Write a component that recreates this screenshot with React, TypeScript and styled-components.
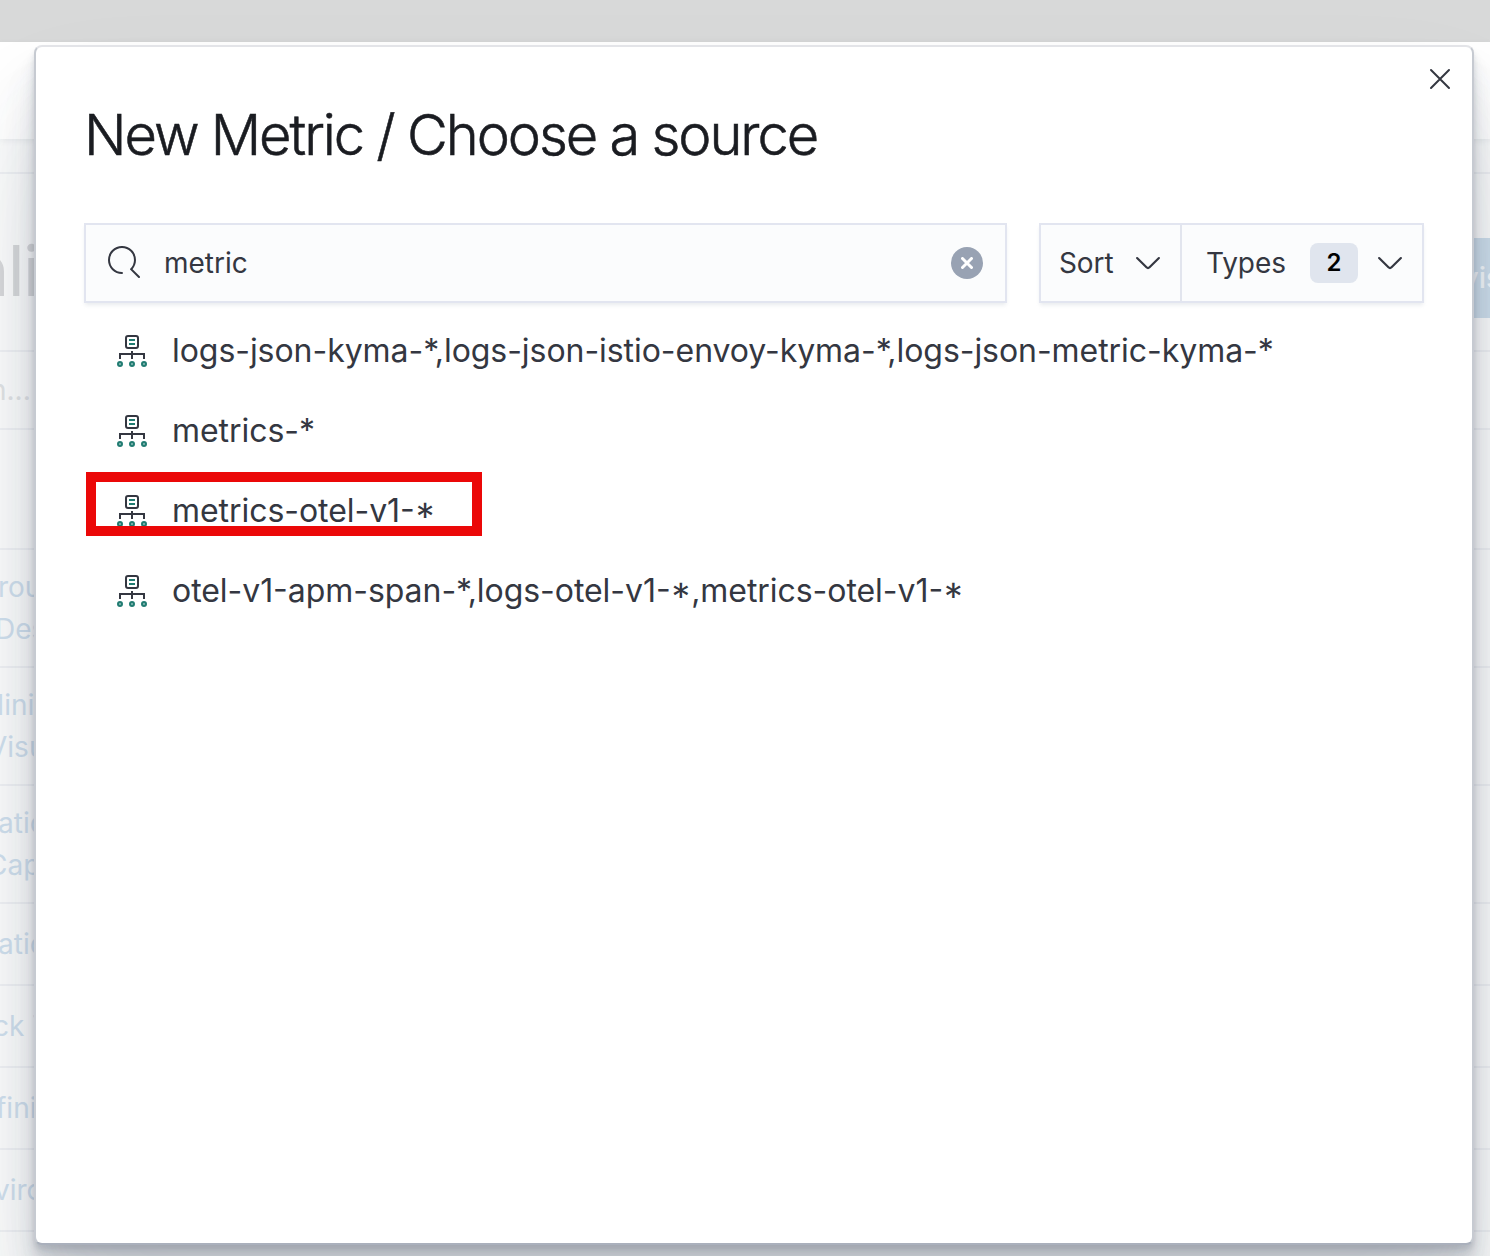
import React from "react";
import styled, { createGlobalStyle, css } from "styled-components";

const GlobalStyle = createGlobalStyle`
  *, *::before, *::after { box-sizing: border-box; }
  body {
    margin: 0;
    overflow: hidden;
    background: #fafbfb;
    font-family: Inter, "Liberation Sans", sans-serif;
    color: #343741;
  }
`;

const Screen = styled.div`
  position: relative;
  width: 1490px;
  height: 1256px;
  overflow: hidden;
`;

/* Dimmed page behind the modal */
const Page = styled.div`
  display: flex;
  flex-direction: column;
`;

const BrowserBar = styled.div`
  height: 42px;
  background: #d8d9d9;
`;

const TopNav = styled.div`
  height: 97px;
  background: #ffffff;
  box-shadow: 0 2px 6px rgba(65, 78, 101, 0.08);
`;

const Band = styled.div<{ $h: number }>`
  display: flex;
  flex-direction: column;
  justify-content: center;
  height: ${(p) => p.$h}px;
  border-bottom: 2px solid #eef0f3;
  overflow: hidden;
`;

const TitleBand = styled(Band)`
  flex-direction: row;
  align-items: center;
  justify-content: space-between;
`;

const PageTitle = styled.div`
  margin: 17px 0 0 -32px;
  font-size: 70px;
  line-height: 84px;
  letter-spacing: -1.7px;
  color: #d6d7d9;
`;

const CreateButton = styled.div`
  display: flex;
  align-items: center;
  width: 30px;
  height: 80px;
  margin-top: 31px;
  padding-left: 2px;
  overflow: hidden;
  background: #cddeeb;
  color: #f4f8fb;
  font-size: 29px;
  font-weight: 500;
`;

const SearchHint = styled.div`
  margin-left: -10px;
  font-size: 28px;
  color: #dfe2e4;
`;

const LinkText = styled.div<{ $shift: number }>`
  margin-left: ${(p) => p.$shift}px;
  width: 120px;
  font-size: 28px;
  line-height: 42px;
  white-space: nowrap;
  color: #cfdfed;
`;

/* Modal */
const Modal = styled.section`
  position: absolute;
  left: 34px;
  top: 45px;
  width: 1440px;
  height: 1200px;
  display: flex;
  flex-direction: column;
  background: #ffffff;
  border: 2px solid #c6cad1;
  border-top-color: #e3e4e8;
  border-bottom-color: #aab0bc;
  border-radius: 8px;
  box-shadow:
    0 80px 128px rgba(65, 78, 101, 0.1),
    0 48px 64px rgba(65, 78, 101, 0.1),
    0 32px 32px rgba(65, 78, 101, 0.1),
    0 16px 16px rgba(65, 78, 101, 0.1),
    0 8px 8px rgba(65, 78, 101, 0.1),
    0 4px 4px rgba(65, 78, 101, 0.1);
`;

const CloseRow = styled.div`
  display: flex;
  justify-content: flex-end;
  height: 48px;
  padding: 16px 16px 0 0;
`;

const IconButton = styled.button`
  display: flex;
  padding: 0;
  border: 0;
  background: none;
  width: 32px;
  height: 32px;
`;

const ModalTitle = styled.h1`
  margin: 0 0 0 48px;
  height: 80px;
  font-size: 56px;
  line-height: 80px;
  font-weight: 300;
  letter-spacing: -2.04px;
  word-spacing: -0.5px;
  -webkit-text-stroke: 0.55px #1a1c21;
  color: #1a1c21;
  white-space: nowrap;
`;

const Toolbar = styled.div`
  display: flex;
  gap: 32px;
  margin: 48px 48px 0;
`;

const control = css`
  display: flex;
  align-items: center;
  height: 80px;
  border: 2px solid #e2e5f0;
  background: #fbfcfd;
  font-size: 28px;
  color: #343741;
  box-shadow: 0 3px 4px -1px rgba(152, 162, 179, 0.22);
`;

const SearchField = styled.div`
  ${control}
  width: 923px;
  padding: 0 22px;
`;

const SearchGlyph = styled.svg`
  width: 32px;
  height: 32px;
  margin-bottom: 2px;
`;

const SearchText = styled.span`
  flex: 1;
  margin-left: 24px;
`;

const ClearButton = styled.button`
  display: flex;
  align-items: center;
  justify-content: center;
  width: 32px;
  height: 32px;
  padding: 0;
  border: 0;
  border-radius: 50%;
  background: #98a2b3;
`;

const FilterGroup = styled.div`
  ${control}
  width: 385px;
`;

const FilterButton = styled.div<{ $w?: number; $pad: string }>`
  display: flex;
  align-items: center;
  justify-content: space-between;
  height: 76px;
  padding: ${(p) => p.$pad};
  letter-spacing: -0.1px;
  ${(p) => (p.$w ? `width: ${p.$w}px; border-right: 2px solid #e2e5ee;` : "flex: 1;")}
`;

const Badge = styled.span`
  width: 48px;
  height: 40px;
  margin-right: -8px;
  border-radius: 8px;
  background: #e0e5ee;
  color: #000000;
  font-size: 24px;
  font-weight: 600;
  line-height: 40px;
  text-align: center;
`;

const List = styled.ul`
  list-style: none;
  margin: 8px 48px 0;
  padding: 0;
`;

const Item = styled.li`
  position: relative;
  display: flex;
  align-items: center;
  height: 80px;
  padding-left: 32px;
`;

const ItemLabel = styled.span`
  margin: 0 0 2px 24px;
  font-size: 32px;
  letter-spacing: -0.05px;
  white-space: nowrap;
`;

/* Dashes and asterisks that follow a digit sit at figure height */
const Figure = styled.span`
  font-feature-settings: "case" 1;
`;

const Highlight = styled.div`
  position: absolute;
  left: 2px;
  top: 1px;
  width: 396px;
  height: 64px;
  border: 10px solid #eb0808;
`;

const SearchIcon = () => (
  <SearchGlyph viewBox="0 0 16 16" fill="#343741">
    <path d="M11.271 11.978l3.872 3.873a.502.502 0 00.708 0 .502.502 0 000-.708l-3.565-3.564c2.38-2.747 2.267-6.923-.342-9.532-2.73-2.73-7.17-2.73-9.898 0-2.728 2.729-2.728 7.17 0 9.9a6.955 6.955 0 004.949 2.05.5.5 0 000-1 5.96 5.96 0 01-4.242-1.757 6.01 6.01 0 010-8.486 6.004 6.004 0 018.484 0 6.01 6.01 0 010 8.486.5.5 0 00-.034.738z" />
  </SearchGlyph>
);

const ArrowDown = () => (
  <svg width="32" height="32" viewBox="0 0 16 16" fill="#343741">
    <path d="M13.069 5.157L8.384 9.768a.546.546 0 01-.768 0L2.93 5.158a.552.552 0 00-.771 0 .53.53 0 000 .759l4.684 4.61a1.65 1.65 0 002.312 0l4.684-4.61a.53.53 0 000-.76.552.552 0 00-.771 0z" />
  </svg>
);

const CrossIcon = () => (
  <svg width="32" height="32" viewBox="0 0 32 32" fill="none" stroke="#343741" strokeWidth="2" strokeLinecap="round">
    <path d="M7 7l18 18M25 7L7 25" />
  </svg>
);

const ClearIcon = () => (
  <svg width="12" height="12" viewBox="0 0 12 12" fill="none" stroke="#fff" strokeWidth="3" strokeLinecap="round">
    <path d="M1.5 1.5l9 9M10.5 1.5l-9 9" />
  </svg>
);

const IndexPatternIcon = () => (
  <svg width="32" height="32" viewBox="0 0 32 32" fill="none" strokeWidth="2">
    <g stroke="#343741">
      <rect x="10" y="1" width="12" height="12" rx="2" />
      <path d="M4 24v-5h24v5M16 16v8" />
    </g>
    <g stroke="#217c72">
      <path d="M13 5h6M13 9h6" />
      <g fill="#8fbfba">
        <circle cx="4" cy="29" r="2" />
        <circle cx="16" cy="29" r="2" />
        <circle cx="28" cy="29" r="2" />
      </g>
    </g>
  </svg>
);

const sources = [
  { name: "logs-json-kyma-*,logs-json-istio-envoy-kyma-*,logs-json-metric-kyma-*" },
  { name: "metrics-*" },
  { name: "metrics-otel-v1-*", marked: true },
  { name: "otel-v1-apm-span-*,logs-otel-v1-*,metrics-otel-v1-*" },
];

const renderName = (name: string) =>
  name
    .split(/(1-\*?)/)
    .map((part, i) => (i % 2 ? <Figure key={i}>{part}</Figure> : part));

const rows: { h: number; lines: [string, number][] }[] = [
  { h: 118, lines: [["rou", -2], ["Des", -5]] },
  { h: 118, lines: [["Mini", -21], ["Visu", -12]] },
  { h: 118, lines: [["atic", -2], ["Cap", -13]] },
  { h: 82, lines: [["atic", -2]] },
  { h: 82, lines: [["ck T", -7]] },
  { h: 82, lines: [["fini", -4]] },
  { h: 82, lines: [["viro", -6]] },
];

export default function App() {
  return (
    <Screen>
      <GlobalStyle />
      <Page>
        <BrowserBar />
        <TopNav />
        <Band $h={35} />
        <TitleBand $h={178}>
          <PageTitle>nli</PageTitle>
          <CreateButton>vis</CreateButton>
        </TitleBand>
        <Band $h={78}>
          <SearchHint>n...</SearchHint>
        </Band>
        <Band $h={120} />
        {rows.map((row, i) => (
          <Band key={i} $h={row.h}>
            {row.lines.map(([text, shift]) => (
              <LinkText key={text} $shift={shift}>{text}</LinkText>
            ))}
          </Band>
        ))}
      </Page>
      <Modal>
        <CloseRow>
          <IconButton aria-label="Close"><CrossIcon /></IconButton>
        </CloseRow>
        <ModalTitle>New Metric / Choose a source</ModalTitle>
        <Toolbar>
          <SearchField>
            <SearchIcon />
            <SearchText>metric</SearchText>
            <ClearButton aria-label="Clear"><ClearIcon /></ClearButton>
          </SearchField>
          <FilterGroup>
            <FilterButton $w={141} $pad="0 16px 0 18px">
              <span>Sort</span>
              <ArrowDown />
            </FilterButton>
            <FilterButton $pad="0 16px 0 24px">
              <span>Types</span>
              <Badge>2</Badge>
              <ArrowDown />
            </FilterButton>
          </FilterGroup>
        </Toolbar>
        <List>
          {sources.map((s) => (
            <Item key={s.name}>
              <IndexPatternIcon />
              <ItemLabel>{renderName(s.name)}</ItemLabel>
              {s.marked && <Highlight />}
            </Item>
          ))}
        </List>
      </Modal>
    </Screen>
  );
}
